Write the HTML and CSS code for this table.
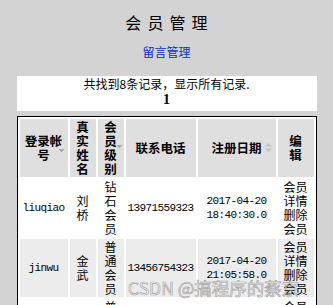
FILE: index.html
```html
<!DOCTYPE html>
<html lang="zh-CN">
<head>
<meta charset="utf-8">
<title>会员管理</title>
<link rel="stylesheet" href="styles.css">
</head>
<body>
<div class="page">
  <h1 class="title">会 员 管 理</h1>
  <div class="nav"><a class="nav-link" href="#">留言管理</a></div>
  <div class="summary">
    <div class="summary-text">共找到8条记录，显示所有记录.</div>
    <div class="summary-page">1</div>
  </div>
  <table class="grid">
    <colgroup>
      <col class="c-acct"><col class="c-name"><col class="c-level"><col class="c-phone"><col class="c-date"><col class="c-edit">
    </colgroup>
    <thead>
      <tr>
        <th class="sortable s-acct">登录帐号<span class="sort sort-down"><svg width="7" height="9" viewBox="0 0 7 9"><path d="M0.5 3.5 L3.5 0.5 L6.5 3.5 Z" fill="#e6e6e6"/><path d="M0.5 5 L6.5 5 L3.5 8.5 Z" fill="#a8a8a8"/></svg></span></th>
        <th><span class="stack">真实姓名</span></th>
        <th class="sortable s-level"><span class="stack">会员级别</span><span class="sort sort-down"><svg width="7" height="9" viewBox="0 0 7 9"><path d="M0.5 3.5 L3.5 0.5 L6.5 3.5 Z" fill="#e6e6e6"/><path d="M0.5 5 L6.5 5 L3.5 8.5 Z" fill="#a8a8a8"/></svg></span></th>
        <th>联系电话</th>
        <th class="sortable s-date">注册日期<span class="sort sort-both"><svg width="9" height="11" viewBox="0 0 9 11"><path d="M1 4.5 L4.5 1 L8 4.5 Z" fill="#c4c4c4"/><path d="M1 6.5 L8 6.5 L4.5 10 Z" fill="#c4c4c4"/></svg></span></th>
        <th><span class="stack">编辑</span></th>
      </tr>
    </thead>
    <tbody>
      <tr class="row">
        <td class="latin">liuqiao</td>
        <td><span class="stack">刘桥</span></td>
        <td><span class="stack">钻石会员</span></td>
        <td class="latin">13971559323</td>
        <td class="latin">2017-04-20 18:40:30.0</td>
        <td><span class="stack2"><a class="op" href="#">会员详情</a><a class="op" href="#">删除会员</a></span></td>
      </tr>
      <tr class="row alt">
        <td class="latin">jinwu</td>
        <td><span class="stack">金武</span></td>
        <td><span class="stack">普通会员</span></td>
        <td class="latin">13456754323</td>
        <td class="latin">2017-04-20 21:05:58.0</td>
        <td><span class="stack2"><a class="op" href="#">会员详情</a><a class="op" href="#">删除会员</a></span></td>
      </tr>
      <tr class="row">
        <td class="latin">wangwu</td>
        <td><span class="stack">王五</span></td>
        <td><span class="stack">普通会员</span></td>
        <td class="latin">13800138000</td>
        <td class="latin">2017-04-21 09:12:44.0</td>
        <td><span class="stack2"><a class="op" href="#">会员详情</a><a class="op" href="#">删除会员</a></span></td>
      </tr>
    </tbody>
  </table>
</div>
<div class="watermark">CSDN @搞程序的蔡京</div>
</body>
</html>
```
FILE: styles.css
```css
html, body {
  margin: 0;
  padding: 0;
  overflow: hidden;
  background: #d3d3d3;
}
body {
  position: relative;
  width: 333px;
  height: 305px;
  font-family: "Noto Sans CJK SC", "Liberation Sans", sans-serif;
  font-size: 12px;
  color: #000;
}
.page {
  display: flex;
  flex-direction: column;
  align-items: center;
}
.title {
  margin: 12px 0 0;
  font-size: 16px;
  font-weight: 400;
  line-height: 20px;
  word-spacing: 2.5px;
}
.nav {
  margin-top: 12px;
  line-height: 16px;
  font-size: 12px;
}
.nav-link {
  color: #0a2fd0;
  text-decoration: none;
}
.summary {
  margin-top: 16px;
  width: 300px;
  background: #fff;
  padding-bottom: 3px;
  text-align: center;
}
.summary-text {
  line-height: 16px;
  font-size: 12px;
}
.summary-page {
  line-height: 16px;
  font-family: "Liberation Serif", serif;
  font-weight: bold;
  font-size: 14px;
}
.grid {
  margin-top: 5px;
  width: 300px;
  table-layout: fixed;
  border: 1px solid #000;
  border-spacing: 2px;
  background: #fff;
}
.c-acct { width: 48px; }
.c-name { width: 26px; }
.c-level { width: 26px; }
.c-phone { width: 70px; }
.c-date { width: 78px; }
.c-edit { width: 36px; }
.grid th, .grid td {
  padding: 1px 0;
  line-height: 14px;
  text-align: center;
  vertical-align: middle;
  overflow: visible;
}
.grid th {
  background: #dfdfdf;
  font-size: 12.5px;
  font-weight: bold;
}
.sortable {
  position: relative;
}
.s-acct { padding-right: 9px; }
.s-level { padding-right: 13px; }
.s-date { padding-right: 12px; }
.sort {
  position: absolute;
  top: 50%;
  line-height: 0;
}
.s-acct .sort { right: 3px; margin-top: -4px; }
.s-level .sort { right: 1px; margin-top: -8px; }
.s-date .sort { right: 3px; margin-top: -6px; }
.stack {
  display: inline-block;
  width: 1em;
  word-break: break-all;
}
.stack2 {
  display: inline-block;
  width: 2em;
  word-break: break-all;
}
.op {
  color: #000;
  text-decoration: none;
}
.row td {
  font-size: 12px;
}
.alt td {
  background: #ececec;
}
.latin {
  font-family: "Liberation Mono", monospace;
  font-size: 11px !important;
  letter-spacing: -0.6px;
}
.watermark {
  position: absolute;
  left: 128px;
  top: 277px;
  font-family: "Noto Sans CJK SC", "Liberation Sans", sans-serif;
  font-size: 17.5px;
  line-height: 22px;
  color: rgba(255, 255, 255, 0.55);
  -webkit-text-stroke: 0.7px rgba(110, 110, 110, 0.6);
  white-space: nowrap;
}
```
